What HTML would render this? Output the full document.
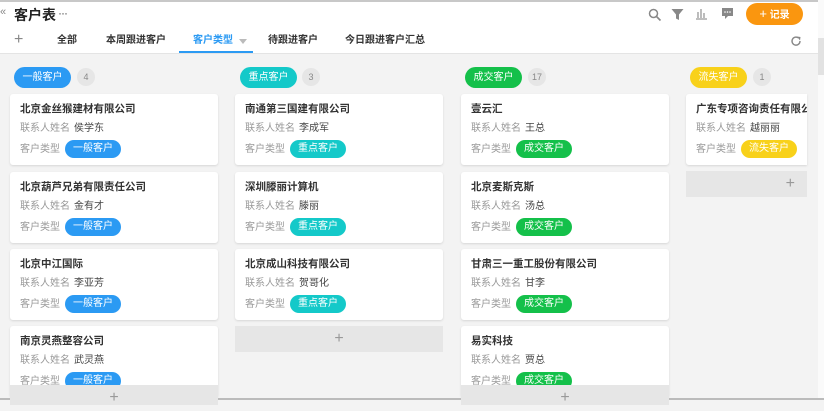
<!DOCTYPE html>
<html><head><meta charset="utf-8"><style>
*{margin:0;padding:0;box-sizing:border-box}
body{width:824px;height:400px;overflow:hidden;background:#f3f3f3;font-family:"Liberation Sans","Noto Sans CJK SC",sans-serif;position:relative;color:#333}
div{line-height:1}
.hdr{position:absolute;left:0;top:0;width:818px;height:54px;background:#fff;border-top:2px solid #c8c8c8;border-bottom:1px solid #e4e4e4}
.abs{position:absolute}
.title{left:14px;top:5px;font-size:14px;font-weight:bold;color:#222;height:16px;line-height:16px}
.tab{top:33px;height:12px;line-height:12px;font-size:10px;font-weight:bold;color:#333}
.pill{position:absolute;height:21px;border-radius:11px;color:#fff;font-size:10px;line-height:21px;text-align:center;width:57px}
.cnt{position:absolute;width:18px;height:18px;border-radius:9px;background:#e6e6e6;color:#888;font-size:9px;line-height:18px;text-align:center}
.card{position:absolute;width:208px;height:71px;background:#fff;border-radius:3px;box-shadow:0 1px 2px rgba(0,0,0,.12);overflow:hidden}
.card .t{position:absolute;left:10px;top:9px;height:13px;line-height:13px;font-size:10.5px;font-weight:bold;color:#333;white-space:nowrap}
.card .l1{position:absolute;left:10px;top:29px;height:12px;line-height:12px;font-size:10px;color:#999;white-space:nowrap}
.card .l1 span{color:#444;margin-left:4px}
.card .l2{position:absolute;left:10px;top:50px;height:12px;line-height:12px;font-size:10px;color:#999}
.card .b{position:absolute;left:55px;top:46px;width:56px;height:18px;border-radius:9px;color:#fff;font-size:10px;line-height:18px;text-align:center}
.add{position:absolute;width:208px;height:26px;background:#e6e6e6;color:#999;font-size:16px;text-align:center;line-height:26px}
.blue{background:#2b9af3}.teal{background:#14c9c9}.green{background:#14c04a}.yel{background:#f8d11a}
</style></head><body>
<div class="hdr">
<div class="abs" style="left:0;top:5px;font-size:11px;line-height:11px;color:#888">«</div>
<div class="abs title">客户表</div>
<div class="abs" style="left:58px;top:5px;font-size:12px;line-height:12px;color:#555;letter-spacing:-1px">···</div>
<div class="abs" style="left:14px;top:30px;font-size:16px;line-height:16px;color:#888">+</div>
<div class="abs tab" style="left:57px">全部</div>
<div class="abs tab" style="left:106px">本周跟进客户</div>
<div class="abs tab" style="left:193px;color:#2b9af3">客户类型</div>
<div class="abs" style="left:239px;top:37px;width:0;height:0;border-left:4px solid transparent;border-right:4px solid transparent;border-top:5px solid #bbb"></div>
<div class="abs" style="left:179px;top:49px;width:74px;height:2px;background:#2b9af3"></div>
<div class="abs tab" style="left:268px">待跟进客户</div>
<div class="abs tab" style="left:345px">今日跟进客户汇总</div>
<svg class="abs" style="left:648px;top:6px" width="14" height="14" viewBox="0 0 14 14"><circle cx="5.5" cy="5.5" r="4" fill="none" stroke="#888" stroke-width="1.5"/><path d="M8.5 8.5L12.5 12.5" stroke="#888" stroke-width="1.6"/></svg>
<svg class="abs" style="left:671px;top:6px" width="13" height="13" viewBox="0 0 13 13"><path d="M0.5 1H12.5L8 6.5V12L5 10.5V6.5Z" fill="#888"/></svg>
<svg class="abs" style="left:695px;top:5px" width="13" height="13" viewBox="0 0 13 13"><path d="M3 5v6M6 2v9M9 6v5M1 12h11" stroke="#999" stroke-width="1.3"/></svg>
<svg class="abs" style="left:721px;top:5px" width="13" height="13" viewBox="0 0 13 13"><path d="M1 1h11v8H7l-3 3V9H1z" fill="#888"/><circle cx="4" cy="5" r=".8" fill="#fff"/><circle cx="6.5" cy="5" r=".8" fill="#fff"/><circle cx="9" cy="5" r=".8" fill="#fff"/></svg>
<div class="abs" style="left:746px;top:1px;width:57px;height:22px;border-radius:11px;background:#fa960f;color:#fff;font-size:10px;font-weight:bold;line-height:22px;text-align:center"><span style="font-size:13px;font-weight:normal">+</span> 记录</div>
<svg class="abs" style="left:790px;top:33px" width="12" height="12" viewBox="0 0 12 12"><path d="M10 6A4 4 0 1 1 8.5 3" fill="none" stroke="#888" stroke-width="1.4"/><path d="M7 1.5L10.5 2L10 5.5Z" fill="#888"/></svg>
</div>
<div class="abs" style="left:818px;top:0;width:6px;height:400px;background:#fafafa"></div>
<div class="abs" style="left:818px;top:38px;width:6px;height:37px;background:#e2e2e2"></div>
<div class="abs" style="left:0;top:398px;width:824px;height:2px;background:#bbb"></div>

<div class="pill blue" style="left:14px;top:67px">一般客户</div><div class="cnt" style="left:77px;top:68px">4</div>
<div class="pill teal" style="left:240px;top:67px">重点客户</div><div class="cnt" style="left:302px;top:68px">3</div>
<div class="pill green" style="left:465px;top:67px">成交客户</div><div class="cnt" style="left:528px;top:68px">17</div>
<div class="pill yel" style="left:690px;top:67px">流失客户</div><div class="cnt" style="left:753px;top:68px">1</div>

<div class="card" style="left:10px;top:94px"><div class="t">北京金丝猴建材有限公司</div><div class="l1">联系人姓名<span>侯学东</span></div><div class="l2">客户类型</div><div class="b blue">一般客户</div></div>
<div class="card" style="left:10px;top:172px"><div class="t">北京葫芦兄弟有限责任公司</div><div class="l1">联系人姓名<span>金有才</span></div><div class="l2">客户类型</div><div class="b blue">一般客户</div></div>
<div class="card" style="left:10px;top:249px"><div class="t">北京中江国际</div><div class="l1">联系人姓名<span>李亚芳</span></div><div class="l2">客户类型</div><div class="b blue">一般客户</div></div>
<div class="card" style="left:10px;top:326px"><div class="t">南京灵燕整容公司</div><div class="l1">联系人姓名<span>武灵燕</span></div><div class="l2">客户类型</div><div class="b blue">一般客户</div></div>
<div class="add" style="left:10px;top:385px;height:20px">+</div>

<div class="card" style="left:235px;top:94px"><div class="t">南通第三国建有限公司</div><div class="l1">联系人姓名<span>李成军</span></div><div class="l2">客户类型</div><div class="b teal">重点客户</div></div>
<div class="card" style="left:235px;top:172px"><div class="t">深圳滕丽计算机</div><div class="l1">联系人姓名<span>滕丽</span></div><div class="l2">客户类型</div><div class="b teal">重点客户</div></div>
<div class="card" style="left:235px;top:249px"><div class="t">北京成山科技有限公司</div><div class="l1">联系人姓名<span>贺哥化</span></div><div class="l2">客户类型</div><div class="b teal">重点客户</div></div>
<div class="add" style="left:235px;top:326px">+</div>

<div class="card" style="left:461px;top:94px"><div class="t">壹云汇</div><div class="l1">联系人姓名<span>王总</span></div><div class="l2">客户类型</div><div class="b green">成交客户</div></div>
<div class="card" style="left:461px;top:172px"><div class="t">北京麦斯克斯</div><div class="l1">联系人姓名<span>汤总</span></div><div class="l2">客户类型</div><div class="b green">成交客户</div></div>
<div class="card" style="left:461px;top:249px"><div class="t">甘肃三一重工股份有限公司</div><div class="l1">联系人姓名<span>甘李</span></div><div class="l2">客户类型</div><div class="b green">成交客户</div></div>
<div class="card" style="left:461px;top:326px"><div class="t">易实科技</div><div class="l1">联系人姓名<span>贾总</span></div><div class="l2">客户类型</div><div class="b green">成交客户</div></div>
<div class="add" style="left:461px;top:385px;height:20px">+</div>

<div class="card" style="left:686px;top:94px;width:121px;border-radius:3px 0 0 3px"><div class="t">广东专项咨询责任有限公司</div><div class="l1">联系人姓名<span>越丽丽</span></div><div class="l2">客户类型</div><div class="b yel">流失客户</div></div>
<div class="add" style="left:686px;top:171px;width:121px;text-align:right;padding-right:12px">+</div>
</body></html>
